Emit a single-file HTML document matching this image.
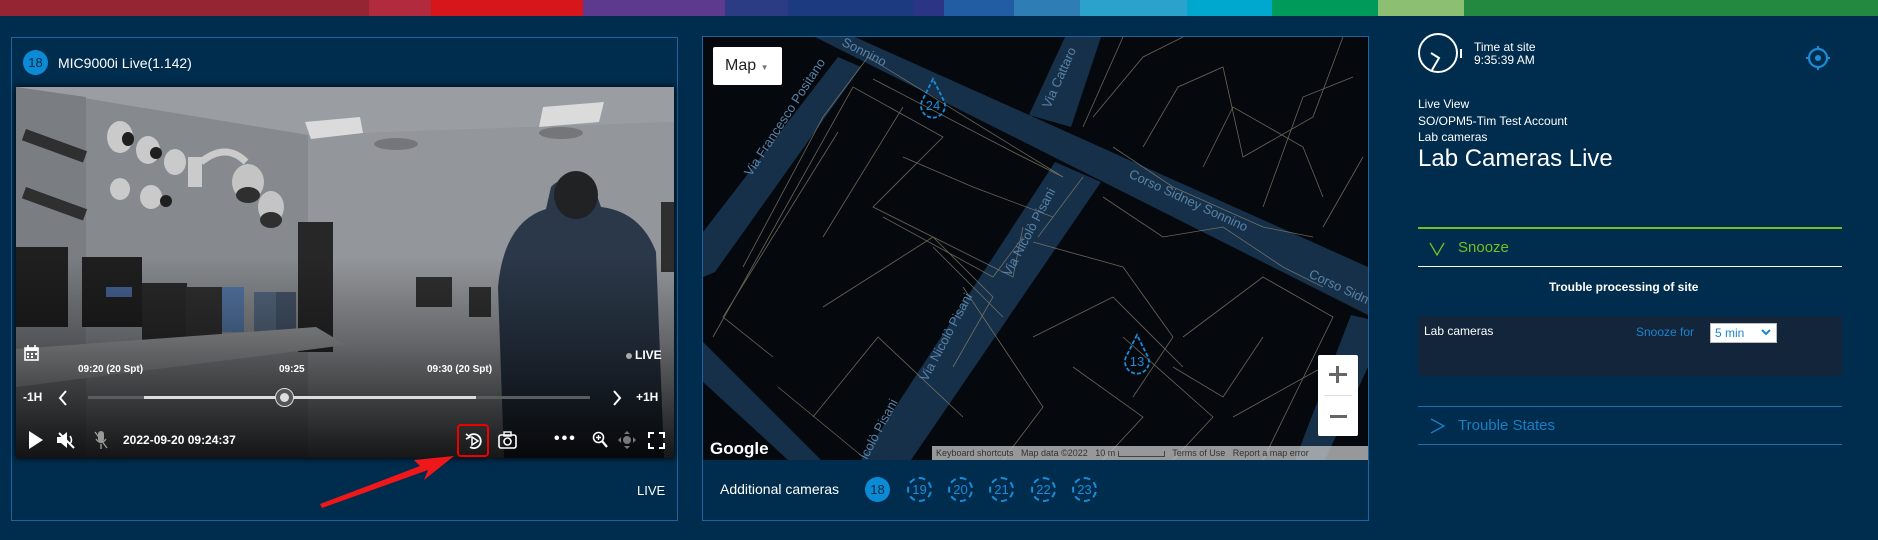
<!DOCTYPE html>
<html><head><meta charset="utf-8"><style>
*{margin:0;padding:0;box-sizing:border-box}
body{width:1878px;height:540px;background:#002c4d;font-family:"Liberation Sans",sans-serif;color:#fff;position:relative;overflow:hidden}
.a{position:absolute}
.bar{position:absolute;top:0;height:16px}
.t{position:absolute;white-space:nowrap}
</style></head><body>
<div class="bar" style="left:0;width:369px;background:#952533"></div>
<div class="bar" style="left:369px;width:62px;background:#b12a3e"></div>
<div class="bar" style="left:431px;width:152px;background:#d6161b"></div>
<div class="bar" style="left:583px;width:142px;background:#5d3a8e"></div>
<div class="bar" style="left:725px;width:63px;background:#2b3c85"></div>
<div class="bar" style="left:788px;width:125px;background:#1c3a80"></div>
<div class="bar" style="left:913px;width:31px;background:#2c3585"></div>
<div class="bar" style="left:944px;width:70px;background:#225da3"></div>
<div class="bar" style="left:1014px;width:66px;background:#2f7db5"></div>
<div class="bar" style="left:1080px;width:107px;background:#2aa2cc"></div>
<div class="bar" style="left:1187px;width:85px;background:#00a8d0"></div>
<div class="bar" style="left:1272px;width:106px;background:#009a5a"></div>
<div class="bar" style="left:1378px;width:86px;background:#8cbf72"></div>
<div class="bar" style="left:1464px;width:414px;background:#238840"></div>

<div class="a" style="left:11px;top:37px;width:667px;height:484px;border:1px solid #1e64a0"></div>
<div class="a" style="left:23px;top:50px;width:25px;height:25px;border-radius:50%;background:#0b8bd6;color:#0a2a44;font-size:13px;text-align:center;line-height:25px">18</div>
<div class="t" style="left:58px;top:55px;font-size:14px;color:#fff">MIC9000i Live(1.142)</div>

<div class="a" style="left:16px;top:87px;width:658px;height:371px;overflow:hidden;background:#9a9da1;box-shadow:0 0 6px #000">
<svg width="658" height="371" viewBox="0 0 658 371">
<polygon points="0,0 658,0 658,35 292,48" fill="#a8abaf"/>
<polygon points="292,48 658,35 658,371 292,371" fill="#a0a3a8"/>
<polygon points="0,0 292,48 292,371 0,371" fill="#929599"/>
<polygon points="0,0 70,10 70,371 0,371" fill="#85888c"/>
<polygon points="289,35 344,30 347,46 295,52" fill="#eee"/>
<polygon points="527,20 588,15 583,35 523,40" fill="#eee"/>
<ellipse cx="380" cy="57" rx="22" ry="6" fill="#7e8184"/>
<ellipse cx="545" cy="46" rx="22" ry="6" fill="#7e8184"/>
<ellipse cx="104" cy="50" rx="13" ry="16" fill="#dcdcdc"/><ellipse cx="112" cy="52" rx="6" ry="7" fill="#222"/>
<ellipse cx="132" cy="63" rx="12" ry="14" fill="#dcdcdc"/><ellipse cx="140" cy="66" rx="6" ry="6" fill="#222"/>
<ellipse cx="159" cy="75" rx="11" ry="13" fill="#dcdcdc"/>
<ellipse cx="104" cy="102" rx="10" ry="11" fill="#dcdcdc"/>
<ellipse cx="135" cy="110" rx="11" ry="12" fill="#dcdcdc"/><circle cx="150" cy="114" r="6" fill="#222"/>
<rect x="10" y="42" width="65" height="12" fill="#333" transform="rotate(20 10 42)"/>
<rect x="10" y="100" width="65" height="12" fill="#333" transform="rotate(20 10 100)"/>
<path d="M185 75 Q210 55 230 75" stroke="#ddd" stroke-width="7" fill="none"/>
<ellipse cx="232" cy="95" rx="16" ry="18" fill="#d5d5d5"/><ellipse cx="232" cy="108" rx="12" ry="8" fill="#333"/>
<ellipse cx="255" cy="120" rx="13" ry="16" fill="#d5d5d5"/><ellipse cx="255" cy="133" rx="11" ry="8" fill="#333"/>
<rect x="172" y="70" width="14" height="30" fill="#ddd"/>
<rect x="0" y="160" width="52" height="80" fill="#222"/>
<rect x="66" y="170" width="60" height="70" fill="#222"/><rect x="90" y="200" width="26" height="10" fill="#4a6aa0"/>
<rect x="126" y="196" width="45" height="60" fill="#2d2d2d"/>
<rect x="170" y="200" width="36" height="50" fill="#333"/>
<rect x="206" y="200" width="22" height="45" fill="#5a7fb0"/>
<rect x="238" y="205" width="22" height="40" fill="#5b6f88"/>
<rect x="260" y="205" width="20" height="40" fill="#4a5a70"/>
<rect x="282" y="135" width="35" height="130" fill="#2b2b2b"/>
<rect x="400" y="190" width="36" height="30" fill="#333"/>
<rect x="453" y="200" width="22" height="30" fill="#333"/>
<polygon points="0,262 300,240 330,258 0,300" fill="#a8aaac"/>
<rect x="645" y="115" width="13" height="70" fill="#333"/>
<path d="M535 100 Q545 88 575 92 L585 120 Q625 125 640 165 L648 371 L488 371 L482 200 Q488 135 530 122 Z" fill="#2f3d50"/>
<ellipse cx="560" cy="108" rx="22" ry="24" fill="#242528"/>
<defs><linearGradient id="g" x1="0" y1="0" x2="0" y2="1"><stop offset="0" stop-color="#000" stop-opacity="0"/><stop offset="0.4" stop-color="#000" stop-opacity="0.3"/><stop offset="1" stop-color="#000" stop-opacity="0.85"/></linearGradient></defs>
<rect x="0" y="0" width="658" height="371" fill="#000" opacity="0.08"/>
<rect x="0" y="170" width="658" height="201" fill="url(#g)"/>
</svg>
</div>
<svg class="a" style="left:24px;top:345px" width="16" height="16" viewBox="0 0 16 16"><rect x="1" y="3" width="13" height="12" fill="none" stroke="#fff" stroke-width="1.6"/><rect x="1" y="3" width="13" height="3" fill="#fff"/><line x1="4" y1="0" x2="4" y2="4" stroke="#fff" stroke-width="1.6"/><line x1="11" y1="0" x2="11" y2="4" stroke="#fff" stroke-width="1.6"/><g fill="#fff"><rect x="3" y="8" width="2" height="2"/><rect x="7" y="8" width="2" height="2"/><rect x="11" y="8" width="2" height="2"/><rect x="3" y="11" width="2" height="2"/><rect x="7" y="11" width="2" height="2"/></g></svg>
<div class="a" style="left:626px;top:353px;width:6px;height:6px;border-radius:50%;background:#aaa"></div>
<div class="t" style="left:635px;top:348px;font-size:12px;font-weight:bold">LIVE</div>
<div class="t" style="left:78px;top:364px;font-size:10px;font-weight:bold">09:20 (20 Spt)</div>
<div class="t" style="left:279px;top:364px;font-size:10px;font-weight:bold">09:25</div>
<div class="t" style="left:427px;top:364px;font-size:10px;font-weight:bold">09:30 (20 Spt)</div>
<div class="a" style="left:88px;top:396px;width:502px;height:3px;background:#5a5d60"></div>
<div class="a" style="left:144px;top:396px;width:332px;height:3px;background:#ddd"></div>
<div class="a" style="left:275px;top:388px;width:19px;height:19px;border-radius:50%;border:1.5px solid #ddd;background:#555"></div>
<div class="a" style="left:280px;top:393px;width:9px;height:9px;border-radius:50%;background:#ddd"></div>
<div class="t" style="left:23px;top:390px;font-size:12px;font-weight:bold">-1H</div>
<svg class="a" style="left:58px;top:389px" width="10" height="18"><path d="M8 2 L2 9 L8 16" stroke="#fff" stroke-width="2" fill="none"/></svg>
<svg class="a" style="left:612px;top:389px" width="10" height="18"><path d="M2 2 L8 9 L2 16" stroke="#fff" stroke-width="2" fill="none"/></svg>
<div class="t" style="left:636px;top:390px;font-size:12px;font-weight:bold">+1H</div>
<svg class="a" style="left:28px;top:431px" width="16" height="18"><path d="M1 0 L15 9 L1 18Z" fill="#fff"/></svg>
<svg class="a" style="left:56px;top:430px" width="20" height="20" viewBox="0 0 20 20"><path d="M1 7 H5 L11 2 V18 L5 13 H1Z" fill="#fff"/><line x1="3" y1="3" x2="18" y2="18" stroke="#fff" stroke-width="2"/><path d="M14 6 Q17 10 14 14" stroke="#fff" stroke-width="1.6" fill="none"/></svg>
<svg class="a" style="left:94px;top:430px" width="14" height="20" viewBox="0 0 14 20"><rect x="4" y="1" width="6" height="11" rx="3" fill="#999"/><path d="M2 9 Q7 16 12 9 M7 14 V19" stroke="#999" stroke-width="1.4" fill="none"/><line x1="1" y1="2" x2="13" y2="18" stroke="#999" stroke-width="1.4"/></svg>
<div class="t" style="left:123px;top:433px;font-size:12px;font-weight:bold">2022-09-20 09:24:37</div>
<div class="a" style="left:457px;top:424px;width:32px;height:33px;border:2px solid #e00;border-radius:4px"></div>
<svg class="a" style="left:464px;top:431px" width="20" height="20" viewBox="0 0 20 20"><path d="M5 5 A7 7 0 1 1 6 16" stroke="#fff" stroke-width="1.8" fill="none"/><path d="M2 3 L6 6 L2 8" stroke="#fff" stroke-width="1.6" fill="none"/><path d="M8 6 L14 10 L8 14Z" stroke="#fff" stroke-width="1.5" fill="none"/></svg>
<svg class="a" style="left:498px;top:431px" width="19" height="18" viewBox="0 0 19 18"><rect x="1" y="4" width="17" height="13" rx="2" fill="none" stroke="#fff" stroke-width="1.6"/><rect x="6" y="1" width="7" height="4" fill="none" stroke="#fff" stroke-width="1.4"/><circle cx="9.5" cy="10.5" r="3.5" fill="none" stroke="#fff" stroke-width="1.6"/></svg>
<div class="t" style="left:554px;top:430px;font-size:16px;font-weight:bold;letter-spacing:2px">•••</div>
<svg class="a" style="left:592px;top:431px" width="16" height="18" viewBox="0 0 16 18"><circle cx="6.5" cy="6.5" r="5" fill="none" stroke="#fff" stroke-width="1.6"/><path d="M4 6.5 H9 M6.5 4 V9" stroke="#fff" stroke-width="1.4"/><line x1="10" y1="10" x2="15" y2="16" stroke="#fff" stroke-width="2.2"/></svg>
<svg class="a" style="left:618px;top:431px" width="18" height="18" viewBox="0 0 18 18"><circle cx="9" cy="9" r="4" fill="#777"/><path d="M9 0 L12 3 H6Z M9 18 L12 15 H6Z M0 9 L3 6 V12Z M18 9 L15 6 V12Z" fill="#777"/></svg>
<svg class="a" style="left:648px;top:432px" width="17" height="17" viewBox="0 0 17 17"><path d="M1 6 V1 H6 M11 1 H16 V6 M16 11 V16 H11 M6 16 H1 V11" stroke="#fff" stroke-width="2" fill="none"/></svg>
<svg class="a" style="left:300px;top:440px" width="170" height="80" viewBox="0 0 170 80"><polygon points="22,68 128,30 124,40 154,16 114,20 120,26 20,64" fill="#f0171a"/></svg>
<div class="t" style="left:637px;top:483px;font-size:13px">LIVE</div>

<div class="a" style="left:702px;top:36px;width:667px;height:485px;border:1px solid #1e64a0"></div>
<div class="a" style="left:703px;top:37px;width:665px;height:423px;overflow:hidden;background:#05080d">
<svg width="665" height="423" viewBox="0 0 665 423">
<g fill="#163049">
<polygon points="112,0 152,0 665,230 665,278"/>
<polygon points="352,125 398,145 208,423 158,423"/>
<polygon points="326,78 362,0 398,0 368,90"/>
<polygon points="135,20 158,30 12,235 0,240 0,195"/>
<polygon points="0,305 0,345 85,423 118,423"/>
<polygon points="648,278 665,282 665,330 622,423 592,423"/>
</g>
<g stroke="#8d8470" stroke-width="0.8" fill="none" opacity="0.75">
<polyline points="165,20 360,140"/><polyline points="170,42 310,115 360,140"/>
<polyline points="75,350 160,420"/><polyline points="40,230 120,80 165,20"/>
<polyline points="10,300 150,50 240,100 170,170 310,240 320,190"/>
<polyline points="200,120 270,150 350,180"/><polyline points="180,180 290,240 320,200"/>
<polyline points="70,320 20,280 135,95"/><polyline points="120,270 230,200 290,260 250,330"/>
<polyline points="110,380 175,300 260,380"/><polyline points="230,210 300,280"/>
<polyline points="390,80 440,20 480,0"/><polyline points="380,90 420,0"/>
<polyline points="440,110 475,50 520,30 540,120 610,80 640,0"/><polyline points="410,110 470,150 560,190 610,200"/>
<polyline points="500,130 530,70 600,110 620,160"/><polyline points="560,170 600,60 650,40"/>
<polyline points="620,190 660,120"/><polyline points="400,160 460,200 520,190 580,230 620,250"/>
<polyline points="335,200 380,140"/><polyline points="330,205 420,230 470,300 430,360"/>
<polyline points="260,250 300,310 340,370 300,423"/><polyline points="330,300 410,260 480,330"/>
<polyline points="370,330 440,380 400,423"/><polyline points="480,300 560,240 630,280 560,423"/>
<polyline points="470,330 520,360 560,300"/><polyline points="420,300 510,380 470,423"/>
<polyline points="200,70 120,200"/><polyline points="530,380 620,330"/>
</g>
<g fill="#5a82a6" font-family="Liberation Sans, sans-serif" font-size="13">
<text transform="translate(138,8) rotate(27)">Sonnino</text>
<text transform="translate(425,140) rotate(25)">Corso Sidney Sonnino</text>
<text transform="translate(605,240) rotate(25)">Corso Sidn</text>
<text transform="translate(347,72) rotate(-66)">Via Cattaro</text>
<text transform="translate(48,140) rotate(-57)">Via Francesco Positano</text>
<text transform="translate(307,240) rotate(-62)">Via Nicolò Pisani</text>
<text transform="translate(224,345) rotate(-62)">Via Nicolò Pisani</text>
<text transform="translate(164,423) rotate(-62)">icolò Pisani</text>
</g>
<g stroke="#1a8cd8" stroke-width="1.8" fill="none" stroke-dasharray="4,2">
<path d="M230 42 L220 62 A12 12 0 1 0 240 62 Z"/><path d="M434 298 L424 318 A12 12 0 1 0 444 318 Z"/>
</g>
<text x="230" y="73" fill="#1a8cd8" font-size="13" text-anchor="middle" font-family="Liberation Sans, sans-serif">24</text>
<text x="434" y="329" fill="#1a8cd8" font-size="13" text-anchor="middle" font-family="Liberation Sans, sans-serif">13</text>
</svg>
<div class="a" style="left:10px;top:10px;width:69px;height:38px;background:#fff;border-radius:2px;color:#222;font-size:16px;line-height:38px;padding-left:12px">Map <span style="font-size:8px;color:#777">▼</span></div>
<div class="a" style="left:615px;top:318px;width:40px;height:81px;background:#fff;border-radius:2px"></div>
<div class="a" style="left:621px;top:358px;width:28px;height:1px;background:#ddd"></div>
<div class="a" style="left:626px;top:336px;width:18px;height:3px;background:#666"></div>
<div class="a" style="left:633px;top:329px;width:3px;height:17px;background:#666"></div>
<div class="a" style="left:627px;top:378px;width:17px;height:3px;background:#666"></div>
<div class="t" style="left:7px;top:402px;font-size:17px;font-weight:bold;color:#fff">Google</div>
<div class="a" style="left:229px;top:409px;width:436px;height:14px;background:rgba(200,200,200,.75);font-size:9px;color:#333;line-height:14px;white-space:nowrap;padding-left:4px">Keyboard shortcuts&nbsp;&nbsp;&nbsp;Map data ©2022&nbsp;&nbsp;&nbsp;10 m <span style="display:inline-block;width:47px;height:6px;border:1px solid #444;border-top:none;vertical-align:middle"></span>&nbsp;&nbsp;&nbsp;Terms of Use&nbsp;&nbsp;&nbsp;Report a map error</div>
</div>
<div class="t" style="left:720px;top:481px;font-size:14px">Additional cameras</div>
<div class="a" style="left:865px;top:477px;width:25px;height:25px;border-radius:50%;background:#0b8bd6;color:#0a2a44;font-size:13px;text-align:center;line-height:25px">18</div>
<div class="a" style="left:907px;top:477px;width:25px;height:25px;border-radius:50%;border:2px dashed #1a8cd8;color:#1a8cd8;font-size:13px;text-align:center;line-height:21px">19</div>
<div class="a" style="left:948px;top:477px;width:25px;height:25px;border-radius:50%;border:2px dashed #1a8cd8;color:#1a8cd8;font-size:13px;text-align:center;line-height:21px">20</div>
<div class="a" style="left:989px;top:477px;width:25px;height:25px;border-radius:50%;border:2px dashed #1a8cd8;color:#1a8cd8;font-size:13px;text-align:center;line-height:21px">21</div>
<div class="a" style="left:1031px;top:477px;width:25px;height:25px;border-radius:50%;border:2px dashed #1a8cd8;color:#1a8cd8;font-size:13px;text-align:center;line-height:21px">22</div>
<div class="a" style="left:1072px;top:477px;width:25px;height:25px;border-radius:50%;border:2px dashed #1a8cd8;color:#1a8cd8;font-size:13px;text-align:center;line-height:21px">23</div>

<svg class="a" style="left:1416px;top:32px" width="50" height="44" viewBox="0 0 50 44"><circle cx="22" cy="21" r="19" fill="none" stroke="#fff" stroke-width="2"/><path d="M15 21 L23 26 L16 38" stroke="#fff" stroke-width="2" fill="none"/><line x1="45" y1="17" x2="45" y2="26" stroke="#fff" stroke-width="2"/></svg>
<div class="t" style="left:1474px;top:41px;font-size:12px;line-height:13px">Time at site<br>9:35:39 AM</div>
<svg class="a" style="left:1806px;top:46px" width="24" height="24" viewBox="0 0 24 24"><circle cx="12" cy="12" r="9" fill="none" stroke="#1a8cd8" stroke-width="2.2"/><circle cx="12" cy="12" r="3" fill="#1a8cd8"/><g fill="#1a8cd8"><rect x="11" y="0" width="2" height="3"/><rect x="11" y="21" width="2" height="3"/><rect x="0" y="11" width="3" height="2"/><rect x="21" y="11" width="3" height="2"/></g></svg>
<div class="t" style="left:1418px;top:96px;font-size:12px;line-height:16.5px">Live View<br>SO/OPM5-Tim Test Account<br>Lab cameras</div>
<div class="t" style="left:1418px;top:145px;font-size:24px;font-weight:300">Lab Cameras Live</div>
<div class="a" style="left:1418px;top:227px;width:424px;height:2px;background:#78be20"></div>
<svg class="a" style="left:1429px;top:242px" width="18" height="14"><path d="M1 1 L8 13 L15 1" stroke="#78be20" stroke-width="1.3" fill="none"/></svg>
<div class="t" style="left:1458px;top:239px;font-size:15px;color:#78be20">Snooze</div>
<div class="a" style="left:1418px;top:266px;width:424px;height:1px;background:#fff"></div>
<div class="t" style="left:1549px;top:280px;font-size:12px;font-weight:bold">Trouble processing of site</div>
<div class="a" style="left:1418px;top:316px;width:424px;height:60px;background:#12253a"></div>
<div class="t" style="left:1424px;top:324px;font-size:12px">Lab cameras</div>
<div class="t" style="left:1636px;top:325px;font-size:12px;color:#1a85d0">Snooze for</div>
<div class="a" style="left:1710px;top:323px;width:67px;height:20px;background:#fff;border:1px solid #bbb;color:#1a85d0;font-size:12px;line-height:18px;padding-left:4px">5 min</div>
<svg class="a" style="left:1761px;top:329px" width="10" height="8"><path d="M1 1 L5 5 L9 1" stroke="#1a85d0" stroke-width="2" fill="none"/></svg>
<div class="a" style="left:1418px;top:406px;width:424px;height:1px;background:#1a6fad"></div>
<svg class="a" style="left:1430px;top:418px" width="16" height="16"><path d="M1 1 L14 8 L1 15" stroke="#1a7fc4" stroke-width="1.3" fill="none"/></svg>
<div class="t" style="left:1458px;top:417px;font-size:15px;color:#1a7fc4">Trouble States</div>
<div class="a" style="left:1418px;top:444px;width:424px;height:1px;background:#1a6fad"></div>
</body></html>
